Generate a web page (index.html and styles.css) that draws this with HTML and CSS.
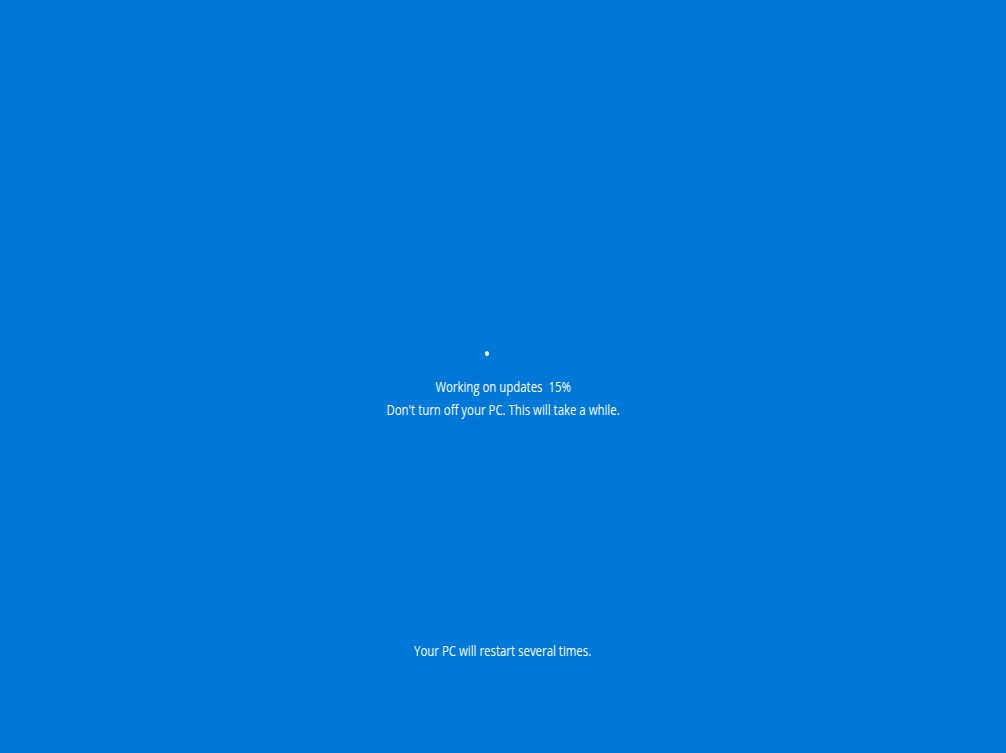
FILE: index.html
```html
<!DOCTYPE html>
<html lang="en">
<head>
<meta charset="utf-8">
<title>Working on updates</title>
<link rel="stylesheet" href="styles.css">
</head>
<body>
<main class="screen">
  <section class="status">
    <div class="spinner"><span class="dot"></span></div>
    <div class="messages">
      <p class="line">Working on updates&nbsp; 15%</p>
      <p class="line">Don't turn off your PC. This will take a while.</p>
    </div>
  </section>
  <footer class="footer">
    <p class="line">Your PC will restart several times.</p>
  </footer>
</main>
</body>
</html>
```
FILE: styles.css
```css
html, body {
  margin: 0;
  padding: 0;
  background: #0078d7;
}
.screen {
  width: 1006px;
  height: 753px;
  display: flex;
  flex-direction: column;
  align-items: center;
  background: #0078d7;
  color: #ffffff;
  font-family: "Open Sans", "Noto Sans", sans-serif;
  font-size: 14px;
  overflow: hidden;
}
.status {
  margin-top: 340px;
  display: flex;
  flex-direction: column;
  align-items: center;
}
.spinner {
  position: relative;
  width: 40px;
  height: 35px;
}
.dot {
  position: absolute;
  left: 2px;
  top: 11px;
  width: 4px;
  height: 5px;
  border-radius: 50%;
  background: #ffffff;
}
.messages {
  display: flex;
  flex-direction: column;
  align-items: center;
}
.line {
  margin: 0;
  line-height: 23px;
  white-space: nowrap;
  transform: scaleX(0.815);
}
.footer {
  margin-top: auto;
  margin-bottom: 91px;
}
```
